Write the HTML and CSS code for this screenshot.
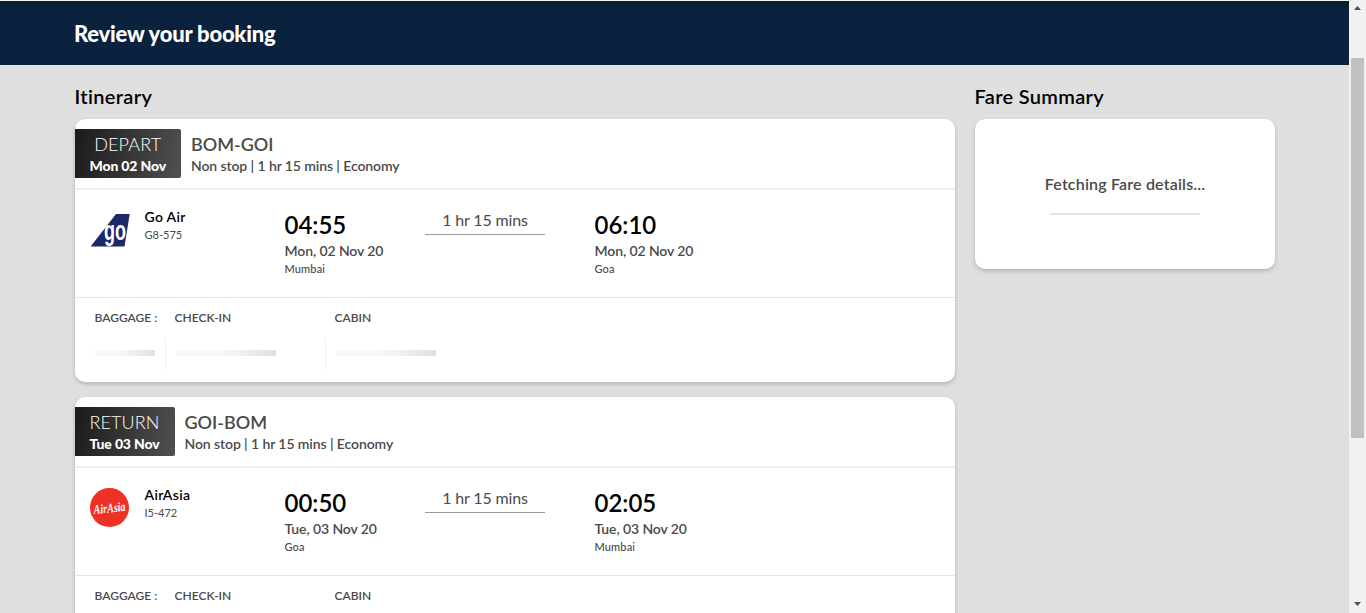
FILE: index.html
```html
<!DOCTYPE html>
<html lang="en">
<head>
<meta charset="utf-8">
<title>Review your booking</title>
<link rel="stylesheet" href="styles.css">
</head>
<body>
<div class="window">
  <div class="page">
    <header class="topbar"><h1 class="topbar-title">Review your booking</h1></header>
    <main class="content">
      <section class="itinerary">
        <h2 class="section-title">Itinerary</h2>
        <article class="card">
          <div class="card-head">
            <div class="tag"><span class="tag-type">DEPART</span><span class="tag-date">Mon 02 Nov</span></div>
            <div class="route"><span class="route-name">BOM-GOI</span><span class="route-info">Non stop | 1 hr 15 mins | Economy</span></div>
          </div>
          <div class="flight">
            <svg class="logo" viewBox="0 0 40 40" role="img" aria-label="Go Air">
              <path d="M26 4H39.700L34.500 36.600H.6Z" fill="#1c2868"/>
              <text class="go-text" x="14" y="29.500" textLength="22" lengthAdjust="spacingAndGlyphs">go</text>
            </svg>
            <div class="airline"><span class="airline-name">Go Air</span><span class="airline-code">G8-575</span></div>
            <div class="stop"><span class="time">04:55</span><span class="date">Mon, 02 Nov 20</span><span class="city">Mumbai</span></div>
            <div class="duration">1 hr 15 mins</div>
            <div class="stop"><span class="time">06:10</span><span class="date">Mon, 02 Nov 20</span><span class="city">Goa</span></div>
          </div>
          <div class="baggage">
            <div class="bag-label">BAGGAGE :</div><div class="bag-label">CHECK-IN</div><div class="bag-label">CABIN</div>
            <div class="bag-cell"><i class="shimmer shimmer-short"></i></div>
            <div class="bag-cell bag-divided"><i class="shimmer"></i></div>
            <div class="bag-cell bag-divided"><i class="shimmer"></i></div>
          </div>
        </article>
        <article class="card">
          <div class="card-head">
            <div class="tag"><span class="tag-type">RETURN</span><span class="tag-date">Tue 03 Nov</span></div>
            <div class="route"><span class="route-name">GOI-BOM</span><span class="route-info">Non stop | 1 hr 15 mins | Economy</span></div>
          </div>
          <div class="flight">
            <svg class="logo" viewBox="0 0 40 40" role="img" aria-label="AirAsia">
              <circle cx="19.500" cy="19.600" r="19.500" fill="#ee3124"/>
              <text class="asia-text" x="3.500" y="24.500" textLength="32" lengthAdjust="spacingAndGlyphs" transform="rotate(-6 19 20)">AirAsia</text>
            </svg>
            <div class="airline"><span class="airline-name">AirAsia</span><span class="airline-code">I5-472</span></div>
            <div class="stop"><span class="time">00:50</span><span class="date">Tue, 03 Nov 20</span><span class="city">Goa</span></div>
            <div class="duration">1 hr 15 mins</div>
            <div class="stop"><span class="time">02:05</span><span class="date">Tue, 03 Nov 20</span><span class="city">Mumbai</span></div>
          </div>
          <div class="baggage">
            <div class="bag-label">BAGGAGE :</div><div class="bag-label">CHECK-IN</div><div class="bag-label">CABIN</div>
            <div class="bag-cell"><i class="shimmer shimmer-short"></i></div>
            <div class="bag-cell bag-divided"><i class="shimmer"></i></div>
            <div class="bag-cell bag-divided"><i class="shimmer"></i></div>
          </div>
        </article>
      </section>
      <aside class="fare">
        <h2 class="section-title">Fare Summary</h2>
        <div class="card fare-card"><span class="fare-text">Fetching Fare details...</span><div class="fare-line"></div></div>
      </aside>
    </main>
  </div>
  <div class="scrollbar">
    <svg class="arrow" viewBox="0 0 17 17"><path d="M5 11L8.500 7L12 11Z"/></svg>
    <div class="track"><div class="thumb"></div></div>
    <svg class="arrow" viewBox="0 0 17 17"><path d="M5 6L8.500 10L12 6Z"/></svg>
  </div>
</div>
</body>
</html>
```
FILE: styles.css
```css
* { box-sizing: border-box; }
body { margin: 0; overflow: hidden; font-family: Lato, "Open Sans", sans-serif; color: #4a4a4a; }
h1, h2 { margin: 0; }
span { display: block; white-space: nowrap; }
.window { display: grid; grid-template-columns: 1349px 17px; height: 613px; }
.page { background: #dfdfdf; overflow: hidden; height: 613px; border-top: 1px solid #f4f4f4; }
.topbar { height: 64px; padding: 1px 0 0 74px; background: linear-gradient(#051c30, #0a223d 8px); display: flex; align-items: center; }
.topbar-title { color: #fff; font-size: 22px; line-height: 31px; font-weight: 900; letter-spacing: -.22px; }
.content { display: flex; gap: 20px; padding: 17px 74px 0 75px; }
.itinerary { width: 880px; }
.fare { width: 300px; }
.section-title { font-size: 20px; line-height: 28px; font-weight: 600; letter-spacing: .33px; color: #000; margin: 0 0 9px -.5px; }
.card { background: #fff; border-radius: 10px; box-shadow: 0 2px 4px rgba(0,0,0,.2); margin-bottom: 15px; height: 263px; }
.card-head { height: 71px; padding-top: 10px; border-bottom: 2px solid #efefef; display: flex; gap: 10px; align-items: flex-start; }
.tag { height: 49px; padding: 4px 15px 0 14.500px; border-radius: 0 2px 2px 0; background: linear-gradient(100deg, #1b1b1b, #505050); color: #fff; text-align: center; }
.tag-type { font-size: 18px; line-height: 23px; font-weight: 300; letter-spacing: .1px; }
.tag-date { font-size: 14px; line-height: 20px; font-weight: 900; letter-spacing: -.15px; }
.route { padding-top: 4px; }
.route-name { font-size: 18px; line-height: 23px; font-weight: 600; }
.route-info { font-size: 14px; line-height: 20px; font-weight: 600; letter-spacing: -.09px; }
.flight { height: 108px; padding: 20px 15px 0; border-bottom: 1px solid #e5e5e5; display: grid; grid-template-columns: 54.500px 140px 140.500px 169.500px 1fr; align-items: start; }
.logo { width: 40px; height: 40px; overflow: visible; }
.go-text { font: bold 28px "Liberation Sans", sans-serif; fill: #fff; }
.asia-text { font: italic bold 13px "Liberation Serif", serif; fill: #fff; }
.airline-name { font-size: 14px; line-height: 14px; font-weight: 600; letter-spacing: .3px; color: #000; }
.airline-code { font-size: 11px; line-height: 16px; padding-top: 3px; }
.time { font-size: 24px; line-height: 30px; font-weight: 600; color: #000; }
.date { font-size: 14px; line-height: 22px; font-weight: 600; letter-spacing: -.1px; }
.city { font-size: 11px; line-height: 14px; font-weight: 500; letter-spacing: .15px; }
.duration { width: 120px; height: 25px; border-bottom: 1px solid #999; font-size: 16px; line-height: 20px; letter-spacing: -.15px; text-align: center; }
.baggage { padding: 10px 20px 0; display: grid; grid-template-columns: 70px 160px 120px; }
.bag-label { font-size: 12px; line-height: 20px; font-weight: 600; height: 31px; white-space: nowrap; margin-left: -.5px; }
.bag-label + .bag-label { padding-left: 10px; }
.bag-cell { height: 31px; display: flex; align-items: center; padding-bottom: 4px; }
.bag-divided { border-left: 1px solid #efefef; padding-left: 10px; }
.shimmer { width: 100px; height: 6px; background: linear-gradient(90deg, #f6f7f8 45%, #eef0f2 65%, #e0e0e0); }
.shimmer-short { width: 60px; }
.fare-card { height: 150px; padding-top: 53px; text-align: center; }
.fare-text { font-size: 16px; line-height: 24px; font-weight: 600; letter-spacing: .18px; }
.fare-line { width: 150px; height: 2px; margin: 17px auto 0; background: #e5e5e5; }
.scrollbar { height: 613px; background: #f1f1f1; display: flex; flex-direction: column; align-items: center; }
.arrow { width: 17px; height: 17px; fill: #505050; flex: none; margin-top: -1px; }
.track { flex: 1; padding-top: 42px; }
.thumb { width: 13px; height: 380px; background: #c1c1c1; }
```
